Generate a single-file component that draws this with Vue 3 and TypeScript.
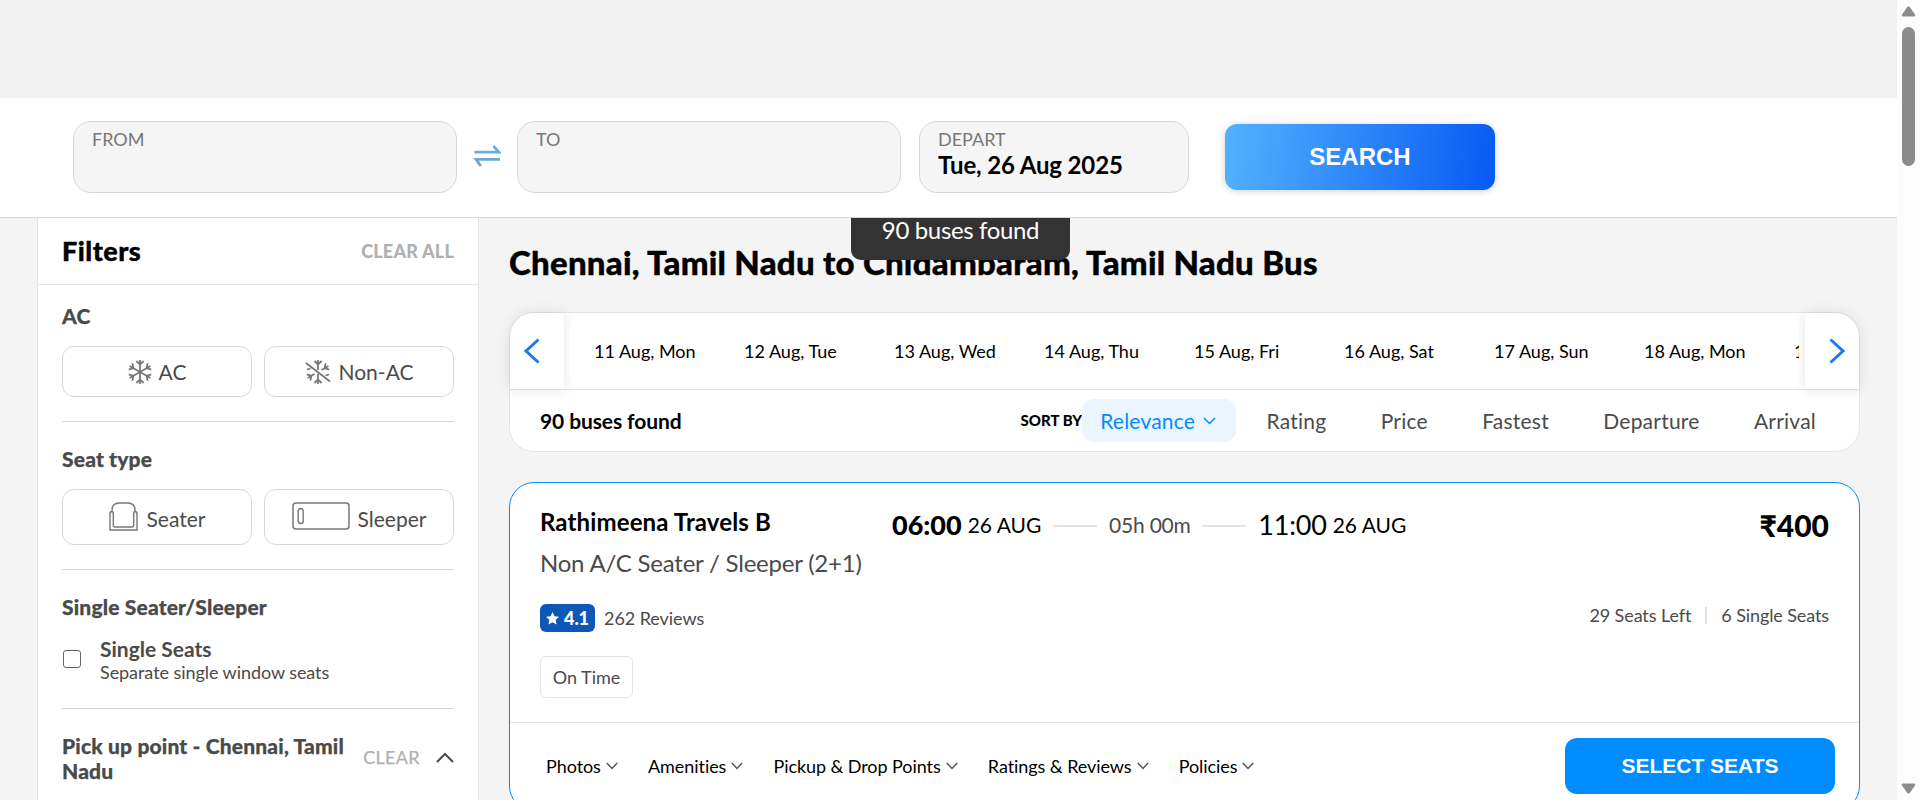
<script setup lang="ts">
const dates: string[] = ['11 Aug, Mon', '12 Aug, Tue', '13 Aug, Wed', '14 Aug, Thu', '15 Aug, Fri', '16 Aug, Sat', '17 Aug, Sun', '18 Aug, Mon', '19 Aug, Tue']
const sorts: string[] = ['Rating', 'Price', 'Fastest', 'Departure', 'Arrival']
const tabs: string[] = ['Photos', 'Amenities', 'Pickup & Drop Points', 'Ratings & Reviews', 'Policies']
const flakeArms: number[] = [0, 60, 120, 180, 240, 300]
const cutFlakeArms: number[] = [0, 60, 180, 240]
</script>

<template>
  <div class="page">
    <div class="view">
      <div class="topbar"></div>
      <header class="search">
        <div class="field wide"><span class="label">FROM</span></div>
        <div class="swap">
          <svg width="28" height="22" viewBox="0 0 28 22" fill="none" stroke-width="2.8">
            <path d="M1.500 7.200H25.800L20.500 1" stroke="#62b0e6" />
            <path d="M27 14.300H3L7.800 21" stroke="#6ea6cc" />
          </svg>
        </div>
        <div class="field wide"><span class="label">TO</span></div>
        <div class="field depart">
          <span class="label">DEPART</span>
          <span class="value">Tue, 26 Aug 2025</span>
        </div>
        <button class="search-btn">SEARCH</button>
      </header>

      <div class="body">
        <aside class="filters">
          <div class="filters-head">
            <span class="filters-title">Filters</span>
            <span class="clear-all">CLEAR ALL</span>
          </div>
          <section class="group ac">
            <h4>AC</h4>
            <div class="options">
              <button class="option">
                <svg class="flake" width="24" height="26" viewBox="-12 -13 24 26" fill="none" stroke="#777" stroke-width="1.8">
                  <path v-for="a in flakeArms" :key="a" :transform="`rotate(${a})`" d="M0 0V-12M-3.6 -11L0 -7.6L3.6 -11" />
                </svg>
                <span>AC</span>
              </button>
              <button class="option">
                <svg class="flake cut" width="26" height="26" viewBox="-13 -13 26 26" fill="none" stroke="#777" stroke-width="1.8">
                  <path v-for="a in cutFlakeArms" :key="a" :transform="`rotate(${a})`" d="M0 -4V-12M-3.6 -11L0 -7.6L3.6 -11" />
                  <path d="M-12 -9L12 9.5M-11 -2.5L-7.5 -3.5M7.5 3.5L11 2.5M0 -4V-2M0 4V2" />
                </svg>
                <span>Non-AC</span>
              </button>
            </div>
          </section>
          <section class="group seat">
            <h4>Seat type</h4>
            <div class="options">
              <button class="option tall">
                <svg class="seater" width="29" height="29" viewBox="0 0 29 29" fill="none" stroke="#777" stroke-width="1.4">
                  <path d="M3 9V8Q3.500 1 10 1H19Q25.500 1 26 8V9" />
                  <path d="M1 28V12Q1 9.500 3 9.500Q4.300 9.500 4.300 12V23Q4.300 25 6 25H23Q24.700 25 24.700 23V12Q24.700 9.500 26 9.500Q28 9.500 28 12V28Z" />
                </svg>
                <span>Seater</span>
              </button>
              <button class="option tall">
                <svg class="sleeper" width="58" height="28" viewBox="0 0 58 28" fill="none" stroke="#777">
                  <rect x="1" y="1" width="56" height="26" rx="3" stroke-width="1.5" />
                  <rect x="6.200" y="6.500" width="5" height="15" rx="2.500" stroke-width="1.400" />
                </svg>
                <span>Sleeper</span>
              </button>
            </div>
          </section>
          <section class="group single">
            <h4>Single Seater/Sleeper</h4>
            <div class="check-row">
              <span class="checkbox"></span>
              <div class="check-text">
                <span class="check-title">Single Seats</span>
                <span class="check-sub">Separate single window seats</span>
              </div>
            </div>
          </section>
          <section class="pickup">
            <h4>Pick up point - Chennai, Tamil Nadu</h4>
            <span class="clear">CLEAR</span>
            <svg width="18" height="12" viewBox="0 0 18 12" fill="none" stroke="#4a4a4a" stroke-width="2">
              <path d="M1 10L9 2L17 10" />
            </svg>
          </section>
        </aside>

        <main class="results">
          <h1>Chennai, Tamil Nadu to Chidambaram, Tamil Nadu Bus</h1>
          <section class="panel">
            <div class="dates">
              <button class="arrow left">
                <svg width="18" height="26" viewBox="0 0 18 26" fill="none" stroke="#1f77ee" stroke-width="3">
                  <path d="M15.500 1.500L3 13L15.500 24.500" />
                </svg>
              </button>
              <div class="strip">
                <span v-for="d in dates" :key="d" class="date">{{ d }}</span>
              </div>
              <button class="arrow right">
                <svg width="18" height="26" viewBox="0 0 18 26" fill="none" stroke="#1f77ee" stroke-width="3">
                  <path d="M2.500 1.500L15 13L2.500 24.500" />
                </svg>
              </button>
            </div>
            <div class="sortbar">
              <span class="count">90 buses found</span>
              <span class="sort-label">SORT BY</span>
              <span class="sort active">
                Relevance
                <svg width="13" height="8" viewBox="0 0 13 8" fill="none" stroke="#008cff" stroke-width="1.500">
                  <path d="M1 1L6.500 6.500L12 1" />
                </svg>
              </span>
              <span v-for="s in sorts" :key="s" class="sort">{{ s }}</span>
            </div>
          </section>

          <article class="bus">
            <div class="bus-info">
              <div class="operator">
                <h2>Rathimeena Travels B</h2>
                <p class="kind">Non A/C Seater / Sleeper (2+1)</p>
                <div class="reviews">
                  <span class="badge">
                    <svg width="13" height="13" viewBox="0 0 24 24" fill="#fff">
                      <path d="M12 0L15.600 7.800L24 8.800L17.800 14.600L19.500 23.200L12 19L4.500 23.200L6.200 14.600L0 8.800L8.400 7.800Z" />
                    </svg>
                    <span>4.1</span>
                  </span>
                  <span>262 Reviews</span>
                </div>
                <span class="ontime">On Time</span>
              </div>
              <div class="schedule">
                <span class="dep">06:00</span>
                <span class="day">26 AUG</span>
                <span class="dash"></span>
                <span class="duration">05h 00m</span>
                <span class="dash"></span>
                <span class="arr">11:00</span>
                <span class="day">26 AUG</span>
              </div>
              <div class="fare">
                <span class="price">₹400</span>
                <div class="seats">
                  <span>29 Seats Left</span>
                  <span class="bar"></span>
                  <span>6 Single Seats</span>
                </div>
              </div>
            </div>
            <div class="bus-foot">
              <span v-for="t in tabs" :key="t" class="tab">
                {{ t }}
                <svg width="12" height="8" viewBox="0 0 12 8" fill="none" stroke="#555" stroke-width="1.500">
                  <path d="M0.800 1L6 6.500L11.200 1" />
                </svg>
              </span>
              <button class="select">SELECT SEATS</button>
            </div>
          </article>
        </main>
        <div class="toast">90 buses found</div>
      </div>
    </div>
    <div class="scrollbar">
      <svg width="15" height="11" viewBox="0 0 15 11" fill="#8b8b8b"><path d="M6.300 1Q7.500 -0.500 8.700 1L14 8.500Q14.500 10.500 13 10.500H2Q0.500 10.500 1 8.500Z" /></svg>
      <div class="thumb"></div>
      <svg class="down" width="15" height="11" viewBox="0 0 15 11" fill="#8b8b8b"><path d="M6.300 10Q7.500 11.500 8.700 10L14 2.500Q14.500 0.500 13 0.500H2Q0.500 0.500 1 2.500Z" /></svg>
    </div>
  </div>
</template>

<style>
body {
  margin: 0;
  overflow: hidden;
}
</style>

<style scoped>
.page {
  display: flex;
  width: 1920px;
  height: 800px;
  overflow: hidden;
  background: #f4f4f4;
  font-family: Lato, "Liberation Sans", sans-serif;
  color: #000;
}
.page * {
  box-sizing: border-box;
}
h1, h2, h4, p {
  margin: 0;
}
button {
  border: 0;
  padding: 0;
  font-family: inherit;
  background: #fff;
}
svg {
  display: block;
  flex: none;
}
.view {
  width: 1897px;
  height: 800px;
  overflow: hidden;
}
.topbar {
  height: 98px;
  background: #f1f1f1;
}
.search {
  display: flex;
  align-items: flex-start;
  height: 120px;
  padding: 23px 0 0 73px;
  background: #fff;
  border-bottom: 1px solid #d8d8d8;
}
.field {
  display: flex;
  flex-direction: column;
  height: 72px;
  padding: 5px 18px 0;
  background: #f5f5f5;
  border: 1px solid #d8d8d8;
  border-radius: 18px;
}
.wide {
  width: 384px;
}
.depart {
  width: 270px;
  margin-left: 18px;
}
.label {
  font-size: 18px;
  line-height: 24px;
  color: #777;
}
.value {
  font-size: 24px;
  font-weight: 700;
  line-height: 28px;
  letter-spacing: -0.14px;
}
.swap {
  display: flex;
  justify-content: center;
  width: 60px;
  padding-top: 24px;
}
.search-btn {
  width: 270px;
  height: 66px;
  margin: 3px 0 0 36px;
  border-radius: 12px;
  background: linear-gradient(97deg, #53b2fe, #065af3);
  box-shadow: 0 1px 7px rgba(0, 0, 0, 0.2);
  color: #fff;
  font: 700 24px "Liberation Sans", sans-serif;
}
.body {
  position: relative;
  display: flex;
  height: 582px;
}
.filters {
  width: 442px;
  height: 620px;
  margin-left: 37px;
  background: #fff;
  border: 1px solid #e5e5e5;
  border-top: 0;
}
.filters-head {
  display: flex;
  align-items: center;
  justify-content: space-between;
  height: 67px;
  padding: 0 24px;
  border-bottom: 1px solid #e5e5e5;
}
.filters-title {
  margin-bottom: 2px;
  font-size: 27px;
  font-weight: 900;
  letter-spacing: 0.5px;
  -webkit-text-stroke: 0.4px #000;
}
.clear-all {
  font-size: 18px;
  font-weight: 900;
  letter-spacing: 0.2px;
  color: #b0b0b0;
}
.group {
  margin: 0 24px;
  border-bottom: 1px solid #d8d8d8;
}
h4 {
  font-size: 21px;
  font-weight: 900;
  line-height: 24px;
  letter-spacing: 0.16px;
  color: #4a4a4a;
  -webkit-text-stroke: 0.25px #4a4a4a;
}
.ac {
  height: 137px;
  padding-top: 19px;
}
.seat {
  height: 148px;
  padding-top: 25px;
}
.single {
  height: 139px;
  padding-top: 25px;
}
.options {
  display: flex;
  gap: 12px;
  margin-top: 18px;
}
.option {
  display: flex;
  align-items: center;
  justify-content: center;
  width: 190px;
  height: 51px;
  border: 1px solid #d8d8d8;
  border-radius: 12px;
  font-size: 21px;
  color: #4a4a4a;
}
.tall {
  height: 56px;
  padding-top: 3px;
}
.flake {
  margin-right: 7px;
}
.cut {
  margin-right: 8px;
}
.seater {
  margin: -4px 9px 0 0;
}
.sleeper {
  margin: -6px 8px 0 0;
}
.check-row {
  display: flex;
  margin-top: 18px;
}
.checkbox {
  width: 18px;
  height: 18px;
  margin: 13px 19px 0 1px;
  border: 1px solid #666;
  border-radius: 3px;
}
.check-text {
  display: flex;
  flex-direction: column;
}
.check-title {
  font-size: 21px;
  font-weight: 700;
  line-height: 24px;
  color: #4a4a4a;
}
.check-sub {
  font-size: 18px;
  line-height: 22px;
  letter-spacing: -0.06px;
  color: #4a4a4a;
}
.pickup {
  display: flex;
  align-items: center;
  padding: 24px 24px 0;
}
.pickup h4 {
  width: 302px;
  line-height: 25px;
}
.clear {
  width: 73px;
  margin-top: -2px;
  font-size: 18px;
  color: #b0b0b0;
  letter-spacing: 0.3px;
  -webkit-text-stroke: 0.25px #b0b0b0;
}
.results {
  width: 1351px;
  margin-left: 30px;
}
h1 {
  height: 94px;
  padding-top: 25px;
  font-size: 33px;
  font-weight: 900;
  line-height: 38px;
  letter-spacing: 0.25px;
  white-space: nowrap;
  -webkit-text-stroke: 0.4px #000;
}
.panel {
  height: 140px;
  background: #fff;
  border: 1px solid #e5e5e5;
  border-radius: 25px;
}
.dates {
  display: flex;
  height: 77px;
  border-bottom: 1px solid #e5e5e5;
}
.arrow {
  display: flex;
  align-items: center;
  width: 54px;
  flex: none;
  box-shadow: 0 0 14px rgba(0, 0, 0, 0.11);
}
.left {
  padding-left: 13px;
  border-radius: 24px 0 0 0;
}
.right {
  padding-left: 23px;
  border-radius: 0 24px 0 0;
}
.strip {
  display: flex;
  align-items: center;
  width: 1229px;
  margin: 0 6px;
  padding-left: 24px;
  overflow: hidden;
  background: #fff;
  border-radius: 18px;
  z-index: 1;
}
.date {
  flex: none;
  width: 150px;
  font-size: 18px;
}
.sortbar {
  display: flex;
  align-items: center;
  height: 61px;
  padding: 0 25px 0 30px;
  color: #4a4a4a;
  font-size: 21px;
  letter-spacing: 0.22px;
}
.count {
  margin-right: auto;
  font-size: 21px;
  font-weight: 700;
  letter-spacing: -0.1px;
  color: #000;
}
.sort-label {
  margin-bottom: 2px;
  font-size: 15px;
  font-weight: 900;
  letter-spacing: 0;
  color: #000;
}
.sort {
  display: flex;
  align-items: center;
  height: 43px;
  padding: 0 18px;
  margin-left: 18.4px;
  border-radius: 12px;
}
.active {
  width: 154px;
  margin: 0 -6px 0 0;
  color: #008cff;
  background: #eaf5ff;
  justify-content: space-between;
  padding-right: 20px;
}
.bus {
  height: 329px;
  margin-top: 30px;
  background: #fff;
  border: 1px solid #008cff;
  border-radius: 25px;
}
.bus-info {
  display: flex;
  height: 240px;
  padding: 0 30px;
  border-bottom: 1px solid #e5e5e5;
}
.operator {
  width: 352px;
  padding-top: 24px;
}
h2 {
  font-size: 24px;
  font-weight: 700;
  line-height: 29px;
  letter-spacing: 0.13px;
}
.kind {
  margin-top: 12px;
  font-size: 24px;
  line-height: 29px;
  letter-spacing: -0.22px;
  color: #4a4a4a;
}
.reviews {
  display: flex;
  align-items: center;
  gap: 9px;
  height: 28px;
  margin-top: 27px;
  font-size: 18px;
  letter-spacing: -0.06px;
  color: #4a4a4a;
}
.badge {
  display: flex;
  align-items: center;
  justify-content: center;
  gap: 5px;
  width: 55px;
  height: 28px;
  border-radius: 6px;
  background: #0d58b7;
  color: #fff;
  font-weight: 900;
}
.ontime {
  display: flex;
  align-items: center;
  justify-content: center;
  width: 93px;
  height: 42px;
  margin-top: 24px;
  border: 1px solid #e5e5e5;
  border-radius: 6px;
  font-size: 18px;
  color: #4a4a4a;
}
.schedule {
  display: flex;
  align-items: center;
  height: 34px;
  margin-top: 24px;
}
.dep, .arr {
  margin-right: 6px;
  font-size: 27px;
}
.dep {
  font-weight: 900;
}
.arr {
  letter-spacing: -0.2px;
}
.day, .duration {
  font-size: 21px;
}
.duration {
  letter-spacing: -0.2px;
  color: #4a4a4a;
}
.dash {
  width: 44px;
  height: 2px;
  margin: 3px 11.8px 0;
  background: #e5e5e5;
}
.fare {
  display: flex;
  flex-direction: column;
  align-items: flex-end;
  margin-left: auto;
  padding-top: 24px;
}
.price {
  font-size: 30px;
  font-weight: 900;
  line-height: 36px;
}
.seats {
  display: flex;
  align-items: center;
  gap: 14px;
  margin-top: 61px;
  font-size: 18px;
  line-height: 22px;
  letter-spacing: -0.1px;
  color: #4a4a4a;
}
.bar {
  width: 2px;
  height: 17px;
  background: #e0e0e0;
}
.bus-foot {
  display: flex;
  align-items: center;
  height: 86px;
  padding: 0 24px 0 36px;
  font-size: 18px;
  letter-spacing: -0.07px;
}
.tab {
  display: flex;
  align-items: center;
  gap: 5px;
  margin-right: 30.2px;
}
.select {
  width: 270px;
  height: 56px;
  margin-left: auto;
  border-radius: 12px;
  background: #008cff;
  color: #fff;
  font: 700 21px "Liberation Sans", sans-serif;
}
.toast {
  position: absolute;
  top: 0;
  left: 851px;
  width: 219px;
  height: 42px;
  border-radius: 0 0 10px 10px;
  background: #333;
  color: #fff;
  font-size: 24px;
  line-height: 24px;
  letter-spacing: -0.35px;
  text-align: center;
}
.scrollbar {
  display: flex;
  flex-direction: column;
  align-items: center;
  width: 23px;
  height: 800px;
  padding: 6px 0 6px;
  background: #fcfcfc;
}
.thumb {
  width: 13px;
  height: 139px;
  margin-top: 10px;
  border-radius: 7px;
  background: #8b8b8b;
}
.down {
  margin-top: auto;
}
</style>
